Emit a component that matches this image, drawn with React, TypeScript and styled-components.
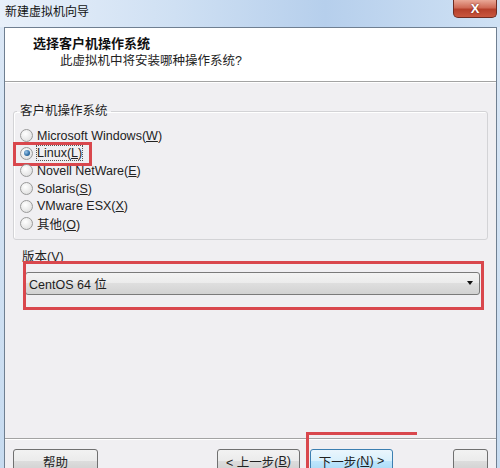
import styled, { createGlobalStyle } from 'styled-components';

const GlobalStyle = createGlobalStyle`
  html, body {
    margin: 0;
    padding: 0;
  }

  body {
    width: 500px;
    height: 468px;
    overflow: hidden;
    font-family: 'Liberation Sans', 'Noto Sans CJK SC', sans-serif;
    font-size: 12px;
    color: #1e1e1e;
  }
`;

const Window = styled.div`
  width: 500px;
  height: 468px;
  display: flex;
  flex-direction: column;
  overflow: hidden;
  background: linear-gradient(#dce8f6, #c7dbf0);
`;

const TitleBar = styled.div`
  height: 27px;
  flex: none;
  display: flex;
  justify-content: space-between;
  padding: 0 3px 0 5px;
  background: linear-gradient(90deg, #e8f0fa 0%, #cfe0f3 35%, #b6cfec 65%, #cfe1f4 100%);
`;

const Title = styled.span`
  line-height: 25px;
  font-size: 12px;
  color: #111;
`;

const CloseButton = styled.div`
  width: 42px;
  height: 17px;
  display: flex;
  align-items: center;
  justify-content: center;
  border: 1px solid #6e2c22;
  border-top: none;
  border-radius: 0 0 5px 5px;
  background: linear-gradient(#e9a897, #cf6a56 45%, #b5402b 55%, #c9573f);
  color: #fff;
  font-weight: bold;
  font-size: 13px;
  text-shadow: 0 0 2px #6a1c10;
`;

const Client = styled.div`
  flex: 1;
  display: flex;
  flex-direction: column;
  margin: 0 3px 0 4px;
  border: 1px solid #6f7f91;
  border-bottom: none;
  background: #f0eff2;
`;

const Header = styled.div`
  height: 54px;
  flex: none;
  padding: 7px 0 0 28px;
  box-sizing: border-box;
  background: #fff;
  border-bottom: 1px solid #a3a3a3;
  box-shadow: 0 1px 0 #fff;
`;

const HeaderTitle = styled.div`
  font-size: 13px;
  font-weight: bold;
  line-height: 17px;
  color: #111;
`;

const HeaderSub = styled.div`
  font-size: 12.5px;
  line-height: 18px;
  margin-left: 27px;
  color: #222;
`;

const Content = styled.div`
  padding: 0 8px;
`;

const Group = styled.fieldset`
  margin: 21px 0 0;
  padding: 0;
  border: 1px solid #d3d3d6;
  border-radius: 3px;
  box-shadow: inset 1px 1px 0 #fff;
`;

const Legend = styled.legend`
  margin-left: 3px;
  padding: 0 3px;
  font-size: 12.5px;
  line-height: 16px;
`;

const Options = styled.div`
  display: flex;
  flex-direction: column;
  align-items: flex-start;
  padding: 8px 6px 6px;
`;

const Option = styled.label<{ $marked?: boolean }>`
  position: relative;
  display: inline-flex;
  align-items: center;
  height: 17.6px;
  font-size: 12.5px;
  color: #222;

  ${(p) =>
    p.$marked &&
    `
    &::after {
      content: '';
      position: absolute;
      top: -3px;
      bottom: -4px;
      left: -7px;
      right: -10px;
      border: 3px solid #d9474d;
    }
  `}
`;

const Radio = styled.span<{ $checked?: boolean }>`
  position: relative;
  width: 11px;
  height: 11px;
  margin-right: 4px;
  border-radius: 50%;
  border: 1px solid #9a9a9a;
  background: radial-gradient(circle at 40% 35%, #ffffff, #e4e4e4 70%, #cfcfcf);

  &::after {
    content: '';
    display: ${(p) => (p.$checked ? 'block' : 'none')};
    position: absolute;
    top: 2.5px;
    left: 2.5px;
    width: 6px;
    height: 6px;
    border-radius: 50%;
    background: radial-gradient(circle at 35% 35%, #9cc6ea, #2f6ea5 60%, #1b4770);
  }
`;

const Dotted = styled.span`
  outline: 1px dotted #555;
  outline-offset: 0;
`;

const FieldLabel = styled.div`
  margin: 9px 0 0 9px;
  font-size: 12.5px;
  line-height: 16px;
`;

const SelectWrap = styled.div`
  position: relative;
  margin: 7px 0 0 12px;
  width: 455px;

  &::after {
    content: '';
    position: absolute;
    top: -11px;
    bottom: -15px;
    left: -2px;
    right: -4px;
    border: 3px solid #d9474d;
  }
`;

const Select = styled.div`
  height: 23px;
  box-sizing: border-box;
  display: flex;
  align-items: center;
  justify-content: space-between;
  padding: 0 6px 0 3px;
  border: 1px solid #7a7a7a;
  border-radius: 3px;
  background: linear-gradient(#f3f3f3, #ebebeb 50%, #dedede 50%, #d2d2d2);
  font-size: 12.5px;
`;

const Arrow = styled.span`
  width: 0;
  height: 0;
  border-left: 3.5px solid transparent;
  border-right: 3.5px solid transparent;
  border-top: 4px solid #111;
`;

const Footer = styled.div`
  margin-top: auto;
  height: 30px;
  flex: none;
  display: flex;
  align-items: flex-start;
  padding: 10px 8px 0;
  box-sizing: border-box;
  border-top: 1px solid #a3a3a3;
  box-shadow: inset 0 1px 0 #fff;
`;

const Button = styled.div<{ $width: number; $gap?: number; $primary?: boolean }>`
  position: relative;
  flex: none;
  width: ${(p) => p.$width}px;
  height: 24px;
  margin-left: ${(p) => p.$gap ?? 0}px;
  box-sizing: border-box;
  display: flex;
  align-items: center;
  justify-content: center;
  font-size: 12.5px;
  color: #222;
  border: 1px solid ${(p) => (p.$primary ? '#3c7fb1' : '#707070')};
  border-radius: 3px;
  background: ${(p) =>
    p.$primary
      ? 'linear-gradient(#eaf6fd, #d9f0fc 50%, #bee6fd 50%, #a7d9f5)'
      : 'linear-gradient(#f2f2f2, #ebebeb 50%, #dddddd 50%, #cfcfcf)'};

  ${(p) =>
    p.$primary &&
    `
    &::after {
      content: '';
      position: absolute;
      top: -18px;
      left: -5px;
      width: 108px;
      height: 40px;
      border-top: 3px solid #d9474d;
      border-left: 3px solid #d9474d;
    }
  `}
`;

const Spacer = styled.div`
  flex: 1;
`;

const options = [
  { label: 'Microsoft Windows', key: 'W' },
  { label: 'Linux', key: 'L', checked: true },
  { label: 'Novell NetWare', key: 'E' },
  { label: 'Solaris', key: 'S' },
  { label: 'VMware ESX', key: 'X' },
  { label: '其他', key: 'O' },
];

const App = () => {
  return (
    <Window>
      <GlobalStyle />
      <TitleBar>
        <Title>新建虚拟机向导</Title>
        <CloseButton>X</CloseButton>
      </TitleBar>
      <Client>
        <Header>
          <HeaderTitle>选择客户机操作系统</HeaderTitle>
          <HeaderSub>此虚拟机中将安装哪种操作系统?</HeaderSub>
        </Header>
        <Content>
          <Group>
            <Legend>客户机操作系统</Legend>
            <Options>
              {options.map((o) => (
                <Option key={o.key} $marked={o.checked}>
                  <Radio $checked={o.checked} />
                  {o.checked ? (
                    <Dotted>
                      {o.label}(<u>{o.key}</u>)
                    </Dotted>
                  ) : (
                    <span>
                      {o.label}(<u>{o.key}</u>)
                    </span>
                  )}
                </Option>
              ))}
            </Options>
          </Group>
          <FieldLabel>
            版本(<u>V</u>)
          </FieldLabel>
          <SelectWrap>
            <Select>
              <span>CentOS 64 位</span>
              <Arrow />
            </Select>
          </SelectWrap>
        </Content>
        <Footer>
          <Button $width={85}>帮助</Button>
          <Spacer />
          <Button $width={83}>
            &lt; 上一步(<u>B</u>)
          </Button>
          <Button $width={83} $gap={10} $primary>
            下一步(<u>N</u>) &gt;
          </Button>
          <Button $width={35} $gap={60} />
        </Footer>
      </Client>
    </Window>
  );
};

export default App;
